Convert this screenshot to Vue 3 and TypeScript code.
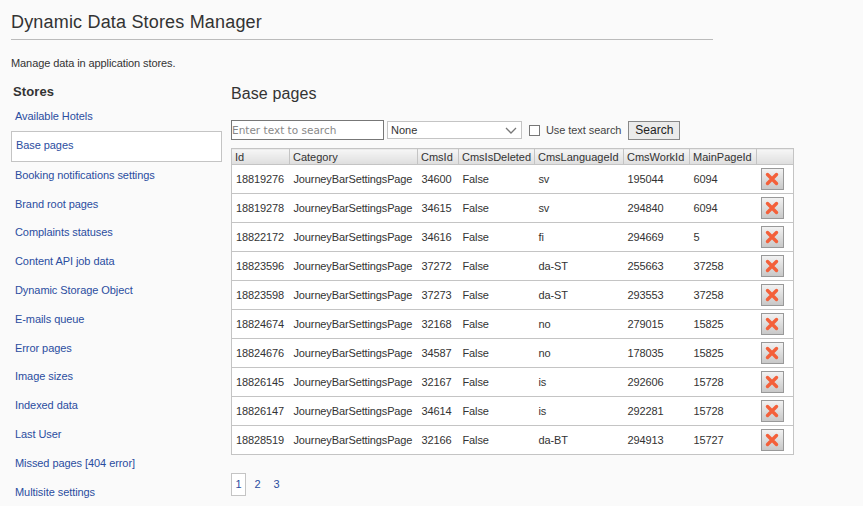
<template>
  <div class="page">
    <h1 class="title">Dynamic Data Stores Manager</h1>
    <p class="intro">Manage data in application stores.</p>

    <div class="columns">
      <aside class="sidebar">
        <h3>Stores</h3>
        <ul class="stores">
          <li v-for="store in stores" :key="store" :class="{ selected: store === 'Base pages' }">
            <a href="#">{{ store }}</a>
          </li>
        </ul>
      </aside>

      <main class="content">
        <h2>Base pages</h2>

        <div class="toolbar">
          <input class="search" type="text" placeholder="Enter text to search" />
          <div class="select">
            <span>None</span>
            <svg width="12" height="7" viewBox="0 0 12 7">
              <path d="M1 1l5 5 5-5" fill="none" stroke="#777" stroke-width="1.3" />
            </svg>
          </div>
          <label class="use-text"><span class="check"></span>Use text search</label>
          <button class="search-btn">Search</button>
        </div>

        <table class="grid">
          <colgroup>
            <col v-for="c in columns" :key="c.name" :class="c.cls" />
            <col class="c-del" />
          </colgroup>
          <thead>
            <tr>
              <th v-for="c in columns" :key="c.name">{{ c.name }}</th>
              <th></th>
            </tr>
          </thead>
          <tbody>
            <tr v-for="row in rows" :key="row[0]">
              <td v-for="(val, i) in row" :key="i">{{ val }}</td>
              <td class="action">
                <button class="del">
                  <svg width="14" height="14" viewBox="0 0 14 14">
                    <path
                      d="M2.5 2.5 11.5 11.5M11.5 2.5 2.5 11.5"
                      fill="none"
                      stroke="#f4603a"
                      stroke-width="3.4"
                      stroke-linecap="round"
                    />
                  </svg>
                </button>
              </td>
            </tr>
          </tbody>
        </table>

        <div class="pager">
          <a class="current" href="#">1</a>
          <a href="#">2</a>
          <a href="#">3</a>
        </div>
      </main>
    </div>
  </div>
</template>

<script setup lang="ts">
const stores = [
  'Available Hotels',
  'Base pages',
  'Booking notifications settings',
  'Brand root pages',
  'Complaints statuses',
  'Content API job data',
  'Dynamic Storage Object',
  'E-mails queue',
  'Error pages',
  'Image sizes',
  'Indexed data',
  'Last User',
  'Missed pages [404 error]',
  'Multisite settings',
];

const columns = [
  { name: 'Id', cls: 'c-id' },
  { name: 'Category', cls: 'c-cat' },
  { name: 'CmsId', cls: 'c-cms' },
  { name: 'CmsIsDeleted', cls: 'c-deleted' },
  { name: 'CmsLanguageId', cls: 'c-lang' },
  { name: 'CmsWorkId', cls: 'c-work' },
  { name: 'MainPageId', cls: 'c-main' },
];

const cat = 'JourneyBarSettingsPage';
const rows = [
  ['18819276', cat, '34600', 'False', 'sv', '195044', '6094'],
  ['18819278', cat, '34615', 'False', 'sv', '294840', '6094'],
  ['18822172', cat, '34616', 'False', 'fi', '294669', '5'],
  ['18823596', cat, '37272', 'False', 'da-ST', '255663', '37258'],
  ['18823598', cat, '37273', 'False', 'da-ST', '293553', '37258'],
  ['18824674', cat, '32168', 'False', 'no', '279015', '15825'],
  ['18824676', cat, '34587', 'False', 'no', '178035', '15825'],
  ['18826145', cat, '32167', 'False', 'is', '292606', '15728'],
  ['18826147', cat, '34614', 'False', 'is', '292281', '15728'],
  ['18828519', cat, '32166', 'False', 'da-BT', '294913', '15727'],
];
</script>

<style>
html,
body {
  margin: 0;
  height: 506px;
  overflow: hidden;
  background: #fafafa;
}
</style>

<style scoped>
.page {
  font-family: "Liberation Sans", Arial, sans-serif;
  font-size: 11px;
  color: #333;
  padding: 0 0 0 11px;
}

.title {
  width: 702px;
  margin: 0;
  padding: 12px 0 6px;
  height: 21px;
  line-height: 21px;
  font-size: 18px;
  font-weight: normal;
  letter-spacing: 0.18px;
  color: #333;
  border-bottom: 1px solid #bbb;
}

.intro {
  margin: 17px 0 0;
  line-height: 13px;
  letter-spacing: -0.09px;
  color: #333;
}

.columns {
  display: flex;
  margin-top: 14px;
}

.sidebar {
  width: 211px;
  flex: none;
}

.sidebar h3 {
  margin: 0 0 0 2px;
  line-height: 16px;
  font-size: 13px;
  font-weight: bold;
  letter-spacing: 0.1px;
  color: #333;
}

.stores {
  list-style: none;
  margin: 1.6px 0 0;
  padding: 0;
}

.stores li {
  display: flex;
  align-items: center;
  height: 28.8px;
  padding-left: 4px;
  box-sizing: border-box;
  letter-spacing: -0.07px;
}

.stores li.selected {
  height: 31px;
  margin: 0.4px 0 -1.4px;
  padding-bottom: 2px;
  background: #fff;
  border: 1px solid #c4c4c4;
}

.stores a {
  color: #2a4da0;
  text-decoration: none;
}

.content {
  margin-left: 9px;
  flex: none;
  width: 563px;
}

.content h2 {
  margin: 0;
  line-height: 20px;
  font-size: 16px;
  font-weight: normal;
  letter-spacing: 0.1px;
  color: #333;
}

.toolbar {
  display: flex;
  align-items: center;
  height: 20px;
  margin-top: 16px;
}

.search {
  width: 153px;
  height: 20px;
  box-sizing: border-box;
  padding: 0;
  border: 1px solid #777;
  background: #fff;
  font: 10.5px "DejaVu Sans", sans-serif;
}

.search::placeholder {
  color: #888;
  opacity: 1;
}

.select {
  display: flex;
  align-items: center;
  justify-content: space-between;
  box-sizing: border-box;
  width: 135px;
  height: 18px;
  margin-left: 3px;
  padding: 0 4px 0 3px;
  background: #fff;
  border: 1px solid #c4c4c4;
}

.use-text {
  display: flex;
  align-items: center;
  margin-left: 7px;
  letter-spacing: -0.07px;
  color: #444;
}

.check {
  box-sizing: border-box;
  width: 11px;
  height: 11px;
  margin-right: 6px;
  background: #fff;
  border: 1px solid #777;
}

.search-btn {
  width: 52px;
  height: 19px;
  margin-left: 7px;
  padding: 0;
  border: 1px solid #888;
  background: #ebebeb;
  font: 12px "Liberation Sans", Arial, sans-serif;
  color: #222;
}

.grid {
  table-layout: fixed;
  width: 562px;
  margin-top: 8px;
  border-collapse: collapse;
  border: 1px solid #c4c4c4;
  background: #fff;
}

.c-id { width: 58px; }
.c-cat { width: 128px; }
.c-cms { width: 41px; }
.c-deleted { width: 76px; }
.c-lang { width: 89px; }
.c-work { width: 66px; }
.c-main { width: 67px; }
.c-del { width: 37px; }

.grid th {
  height: 15px;
  padding: 0 0 0 3px;
  text-align: left;
  font-weight: normal;
  color: #333;
  background: linear-gradient(#f6f6f6, #dedede);
  border-right: 1px solid #c4c4c4;
  border-bottom: 1px solid #c4c4c4;
}

.grid th:last-child {
  border-right: none;
}

.grid td {
  height: 28px;
  padding: 0 0 0 4px;
  border-bottom: 1px solid #c4c4c4;
  letter-spacing: -0.13px;
  color: #333;
}

.grid tr:last-child td {
  border-bottom: none;
}

.grid td.action {
  padding: 0 0 0 4px;
}

.del {
  display: flex;
  align-items: center;
  justify-content: center;
  width: 23px;
  height: 22px;
  padding: 0;
  border: 1px solid #999;
  background: linear-gradient(#f2f2f2, #c8c8c8);
}

.pager {
  display: flex;
  margin-top: 18px;
  line-height: 22px;
}

.pager a {
  width: 15px;
  margin-right: 4px;
  box-sizing: border-box;
  text-align: center;
  color: #2a4da0;
  text-decoration: none;
}

.pager a.current {
  height: 23px;
  border: 1px solid #c4c4c4;
  background: #fff;
  line-height: 21px;
}
</style>
